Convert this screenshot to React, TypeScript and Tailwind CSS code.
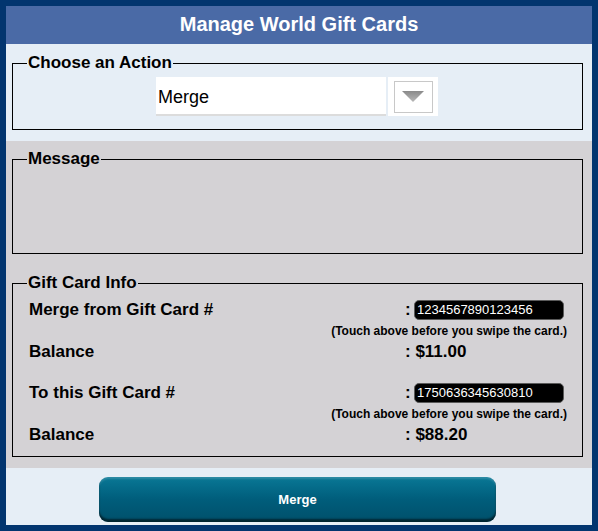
const font = { fontFamily: '"Liberation Sans", Arial, sans-serif' };

interface CardRowProps {
  label: string;
  number: string;
  balance: string;
  first?: boolean;
}

function CardRows({ label, number, balance, first }: CardRowProps) {
  return (
    <>
      {/* card number */}
      <div className={`flex items-center h-5 ${first ? "mt-[7px]" : "mt-[21px]"}`}>
        <span className="w-[376px] text-[17px] font-bold leading-5">{label}</span>
        <span className="text-[17px] font-bold leading-5 w-[9px]">:</span>
        <div className="w-[150px] h-5 bg-black rounded-[5px] border border-[#5a5a5a] text-white text-[13px] leading-[18px] pl-[2px]">
          {number}
        </div>
      </div>
      <div className="mt-1 h-[14px] text-[12px] font-bold leading-[14px] text-right">
        (Touch above before you swipe the card.)
      </div>
      {/* balance */}
      <div className="flex items-center mt-1 h-5">
        <span className="w-[376px] text-[17px] font-bold leading-5">Balance</span>
        <span className="text-[17px] font-bold leading-5">: {balance}</span>
      </div>
    </>
  );
}

export default function App() {
  return (
    <div className="w-[598px] h-[531px] border-[6px] border-[#02356f] bg-[#e6eef6] flex flex-col text-black" style={font}>
      {/* Header */}
      <div className="h-[38px] bg-[#4a6aa6] flex items-center justify-center pb-[3px]">
        <h1 className="text-white text-[20px] font-bold leading-6">Manage World Gift Cards</h1>
      </div>

      {/* Action */}
      <div className="h-[97px] pt-[9px] pl-[6px] pr-[9px]">
        <fieldset className="border border-black pl-[14px] pr-[15px] pb-[13px]">
          <legend className="text-[17px] font-bold leading-5 px-px">Choose an Action</legend>
          <div className="flex justify-center gap-[2px] mt-1">
            <div className="w-[230px] h-[39px] bg-white border-b-2 border-[#dcdcdc] flex items-center pl-[2px] pt-[3px] text-[18px]">
              Merge
            </div>
            <div className="w-[50px] h-[39px] bg-white flex items-center justify-center">
              <div className="w-[39px] h-[32px] border border-[#c8c8c8] flex items-center justify-center">
                <svg width="22" height="11" viewBox="0 0 22 11">
                  <defs>
                    <linearGradient id="tri" x1="0" y1="0" x2="0" y2="1">
                      <stop offset="0" stopColor="#8a8a8a" />
                      <stop offset="1" stopColor="#b8b8b8" />
                    </linearGradient>
                  </defs>
                  <path d="M0 0 L22 0 L11 11 Z" fill="url(#tri)" />
                </svg>
              </div>
            </div>
          </div>
        </fieldset>
      </div>

      {/* Gray section */}
      <div className="h-[327px] bg-[#d4d2d5] pt-2 pl-[6px] pr-[9px]">
        <fieldset className="border border-black h-[105px]">
          <legend className="text-[17px] font-bold leading-5 px-px ml-[14px]">Message</legend>
        </fieldset>

        <fieldset className="border border-black mt-[19px] pl-[16px] pr-[15px] pb-[11px]">
          <legend className="text-[17px] font-bold leading-5 px-px -ml-[2px]">Gift Card Info</legend>
          <CardRows first label="Merge from Gift Card #" number="1234567890123456" balance="$11.00" />
          <CardRows label="To this Gift Card #" number="1750636345630810" balance="$88.20" />
        </fieldset>
      </div>

      {/* Button */}
      <div className="flex-1 flex justify-center pt-[9px] pr-[3px]">
        <button className="w-[397px] h-[45px] rounded-[9px] bg-gradient-to-b from-[#0a7896] via-[#005d7b] to-[#00506b] text-white text-[13px] font-bold shadow-[inset_0_-3px_2px_rgba(0,0,0,0.55),inset_0_2px_2px_rgba(255,255,255,0.15)]">
          Merge
        </button>
      </div>
    </div>
  );
}
